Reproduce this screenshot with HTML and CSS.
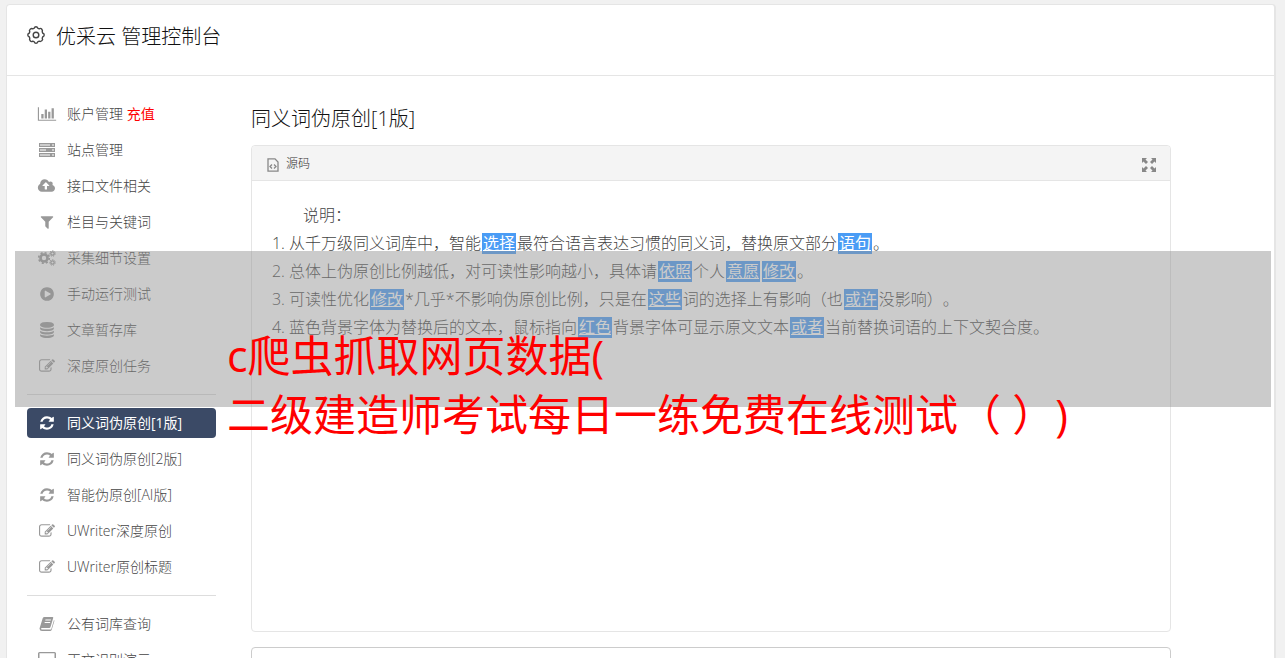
FILE: index.html
```html
<!DOCTYPE html>
<html lang="zh-CN">
<head>
    <meta charset="UTF-8">
    <meta name="viewport" content="width=device-width, initial-scale=1.0">
    <title>优采云 管理控制台</title>
    <link rel="stylesheet" href="styles.css">
</head>
<body>

    <svg class="sprite" aria-hidden="true">
        <symbol id="i-chart" viewBox="0 0 2048 1792"><path d="M640 896v512h-256v-512h256zm384-512v1024h-256v-1024h256zm1024 1152v128h-2048v-1536h128v1408h1920zm-640-896v768h-256v-768h256zm384-384v1152h-256v-1152h256z"/></symbol>
        <symbol id="i-server" viewBox="0 0 16 16"><path fill-rule="evenodd" d="M0 1h16v4H0zM1 2.500v1h10v-1zM13 2.500v1h2v-1zM0 6h16v4H0zM1 7.500v1h6v-1zM13 7.500v1h2v-1zM0 11h16v4H0zM1 12.500v1h10v-1zM13 12.500v1h2v-1z"/></symbol>
        <symbol id="i-cloud" viewBox="0 0 1920 1792"><path d="M1216 864q0-14-9-23l-352-352q-9-9-23-9t-23 9l-351 351q-10 12-10 24 0 14 9 23t23 9h224v352q0 13 9.500 22.500t22.500 9.500h192q13 0 22.500-9.500t9.500-22.500v-352h224q13 0 22.500-9.500t9.500-22.500zm640 288q0 159-112.500 271.500t-271.500 112.500h-1088q-185 0-316.500-131.500t-131.500-316.500q0-130 70-240t188-165q-2-30-2-43 0-212 150-362t362-150q156 0 285.500 87t188.500 231q71-62 166-62 106 0 181 75t75 181q0 76-41 138 130 31 213.500 135.500t83.500 238.500z"/></symbol>
        <symbol id="i-filter" viewBox="0 0 1792 1792"><path d="M1595 295q17 41-14 70l-493 493v742q0 42-39 59-13 5-25 5-27 0-45-19l-256-256q-19-19-19-45v-486l-493-493q-31-29-14-70 17-39 59-39h1280q42 0 59 39z"/></symbol>
        <symbol id="i-cogs" viewBox="0 0 18 16">
            <g fill="none" stroke="currentColor">
                <circle cx="6" cy="8" r="3.500" stroke-width="2.600"/>
                <circle cx="6" cy="8" r="5.300" stroke-width="1.600" stroke-dasharray="2.080 2.080"/>
                <circle cx="14.500" cy="3.500" r="1.700" stroke-width="1.300"/>
                <circle cx="14.500" cy="3.500" r="2.800" stroke-width="1" stroke-dasharray="1.250 1.260"/>
                <circle cx="14.500" cy="12.500" r="1.700" stroke-width="1.300"/>
                <circle cx="14.500" cy="12.500" r="2.800" stroke-width="1" stroke-dasharray="1.250 1.260"/>
            </g>
        </symbol>
        <symbol id="i-play" viewBox="0 0 1792 1792"><path d="M896 128q209 0 385.500 103t279.500 279.500 103 385.500-103 385.500-279.500 279.500-385.500 103-385.500-103-279.500-279.500-103-385.500 103-385.500 279.500-279.500 385.500-103zm384 823q32-18 32-55t-32-55l-544-320q-31-19-64-1-32 19-32 56v640q0 37 32 56 16 8 32 8 17 0 32-9z"/></symbol>
        <symbol id="i-database" viewBox="0 0 1792 1792"><path d="M896 768q237 0 443-43t325-127v170q0 69-103 128t-280 93.500-385 34.500-385-34.500-280-93.500-103-128v-170q119 84 325 127t443 43zm0 768q237 0 443-43t325-127v170q0 69-103 128t-280 93.500-385 34.500-385-34.500-280-93.500-103-128v-170q119 84 325 127t443 43zm0-384q237 0 443-43t325-127v170q0 69-103 128t-280 93.500-385 34.500-385-34.500-280-93.500-103-128v-170q119 84 325 127t443 43zm0-1152q208 0 385 34.500t280 93.500 103 128v128q0 69-103 128t-280 93.500-385 34.500-385-34.500-280-93.500-103-128v-128q0-69 103-128t280-93.500 385-34.500z"/></symbol>
        <symbol id="i-edit" viewBox="0 0 1792 1792"><path d="M888 1184l116-116-152-152-116 116v56h96v96h56zm440-720q-16-16-33 1l-350 350q-17 17-1 33t33-1l350-350q17-17 1-33zm80 594v190q0 119-84.500 203.500t-203.500 84.500h-832q-119 0-203.500-84.500t-84.500-203.500v-832q0-119 84.500-203.500t203.500-84.500h832q63 0 117 25 15 7 18 23 3 17-9 29l-49 49q-14 14-32 8-23-6-45-6h-832q-66 0-113 47t-47 113v832q0 66 47 113t113 47h832q66 0 113-47t47-113v-126q0-13 9-22l64-64q15-15 35-7t20 29zm-96-738l288 288-672 672h-288v-288zm444 132l-92 92-288-288 92-92q28-28 68-28t68 28l152 152q28 28 28 68t-28 68z"/></symbol>
        <symbol id="i-refresh" viewBox="0 0 1792 1792"><path d="M1639 1056q0 5-1 7-64 268-268 434.500t-478 166.500q-146 0-282.500-55t-243.500-157l-129 129q-19 19-45 19t-45-19-19-45v-448q0-26 19-45t45-19h448q26 0 45 19t19 45-19 45l-137 137q71 66 161 102t187 36q134 0 250-65t186-179q11-17 53-117 8-23 30-23h192q13 0 22.500 9.500t9.500 22.500zm25-800v448q0 26-19 45t-45 19h-448q-26 0-45-19t-19-45 19-45l138-138q-148-137-349-137-134 0-250 65t-186 179q-11 17-53 117-8 23-30 23h-199q-13 0-22.500-9.500t-9.500-22.500v-7q65-268 270-434.500t480-166.500q146 0 284 55.500t245 156.500l130-129q19-19 45-19t45 19 19 45z"/></symbol>
        <symbol id="i-book" viewBox="0 0 16 16"><path fill-rule="evenodd" d="M5.500 1h8q1 0 .7 1L11.500 11q-.3 1-1.300 1H3q-1 0-1 .7t1 .8h8.500q.6 0 .8-.6L15 4q.6.500.3 1.300L12.700 13.700Q12.300 15 11 15H3Q.6 15 .5 12.500L3.700 2.300Q4.200 1 5.500 1zM6.500 3.500l-.3 1h5.500l.3-1zM5.800 6l-.3 1H11l.3-1z"/></symbol>
        <symbol id="i-desktop" viewBox="0 0 18 16"><path fill-rule="evenodd" d="M1.500 0h15Q18 0 18 1.500v10q0 1.500-1.500 1.500H11v1.500h2V16H5v-1.500h2V13H1.500Q0 13 0 11.500v-10Q0 0 1.500 0zm0 1.300v8.700h15V1.300z"/></symbol>
    </svg>

    <div class="page">
        <header class="page-header">
            <svg class="logo" viewBox="0 0 18 18" fill="none" stroke="currentColor" stroke-width="1.400">
                <path stroke-linejoin="round" d="M7.300 2.200Q7.600.8 9 .8T10.700 2.200L12.200 2.800Q13.700 1.800 14.800 3.200T15.200 5.800L15.800 7.300Q17.200 7.600 17.200 9T15.800 10.700L15.200 12.200Q16.200 13.700 14.800 14.800T12.200 15.200L10.700 15.800Q10.400 17.200 9 17.200T7.300 15.800L5.800 15.200Q4.300 16.200 3.200 14.800T2.800 12.200L2.200 10.700Q.8 10.400.8 9T2.200 7.300L2.800 5.800Q1.800 4.300 3.200 3.200T5.800 2.800z"/>
                <circle cx="9" cy="9" r="2.800"/>
            </svg>
            <h1>优采云 管理控制台</h1>
        </header>

        <div class="layout">
            <nav class="sidebar">
                <a class="item" href="#"><svg><use href="#i-chart"/></svg><span>账户管理 <span class="recharge">充值</span></span></a>
                <a class="item" href="#"><svg><use href="#i-server"/></svg>站点管理</a>
                <a class="item" href="#"><svg><use href="#i-cloud"/></svg>接口文件相关</a>
                <a class="item" href="#"><svg><use href="#i-filter"/></svg>栏目与关键词</a>
                <a class="item" href="#"><svg><use href="#i-cogs"/></svg>采集细节设置</a>
                <a class="item" href="#"><svg><use href="#i-play"/></svg>手动运行测试</a>
                <a class="item" href="#"><svg><use href="#i-database"/></svg>文章暂存库</a>
                <a class="item" href="#"><svg><use href="#i-edit"/></svg>深度原创任务</a>
                <hr>
                <a class="item active" href="#"><svg><use href="#i-refresh"/></svg>同义词伪原创[1版]</a>
                <a class="item" href="#"><svg><use href="#i-refresh"/></svg>同义词伪原创[2版]</a>
                <a class="item" href="#"><svg><use href="#i-refresh"/></svg>智能伪原创[AI版]</a>
                <a class="item" href="#"><svg><use href="#i-edit"/></svg>UWriter深度原创</a>
                <a class="item" href="#"><svg><use href="#i-edit"/></svg>UWriter原创标题</a>
                <hr>
                <a class="item" href="#"><svg><use href="#i-book"/></svg>公有词库查询</a>
                <a class="item" href="#"><svg><use href="#i-desktop"/></svg>正文识别演示</a>
            </nav>

            <main class="content">
                <h2>同义词伪原创[1版]</h2>
                <section class="editor">
                    <div class="toolbar">
                        <button class="tool" type="button">
                            <svg class="source-icon" viewBox="0 0 12 14" fill="none" stroke="currentColor">
                                <path d="M1 .8h7L11 4v9.200H1z" stroke-width="1.300"/>
                                <path d="M5 6.500L3 8.500l2 2M7 6.500l2 2-2 2" stroke-width="1.300"/>
                            </svg>
                            源码
                        </button>
                        <button class="tool" type="button" aria-label="全屏">
                            <svg class="full-icon" viewBox="0 0 14 14">
                                <path d="M0 0h5L3.500 1.500 6 4 4 6 1.500 3.500 0 5zM14 0v5l-1.500-1.500L10 6 8 4l2.500-2.500L9 0zM0 14V9l1.500 1.500L4 8l2 2-2.500 2.500L5 14zM14 14H9l1.500-1.500L8 10l2-2 2.500 2.500L14 9z"/>
                            </svg>
                        </button>
                    </div>
                    <div class="text">
                        <p>说明：</p>
                        <ol>
                            <li>从千万级同义词库中，智能<a href="#">选择</a>最符合语言表达习惯的同义词，替换原文部分<a href="#">语句</a>。</li>
                            <li>总体上伪原创比例越低，对可读性影响越小，具体请<a href="#">依照</a>个人<a href="#">意愿</a><a href="#">修改</a>。</li>
                            <li>可读性优化<a href="#">修改</a>*几乎*不影响伪原创比例，只是在<a href="#">这些</a>词的选择上有影响（也<a href="#">或许</a>没影响）。</li>
                            <li>蓝色背景字体为替换后的文本，鼠标指向<a href="#">红色</a>背景字体可显示原文文本<a href="#">或者</a>当前替换词语的上下文契合度。</li>
                        </ol>
                    </div>
                </section>
                <textarea class="result" aria-label="结果"></textarea>
            </main>
        </div>
    </div>

    <div class="banner">
        <p>c爬虫抓取网页数据(<br>二级建造师考试每日一练免费在线测试（ ）)</p>
    </div>

</body>
</html>
```
FILE: styles.css
```css
* {
    box-sizing: border-box;
}
body {
    position: relative;
    height: 100vh;
    margin: 0;
    padding: 4px 9px 0 6px;
    overflow: hidden;
    background: #f1f1f1;
    color: #555;
    font-family: "Open Sans", "Noto Sans CJK SC", sans-serif;
    font-size: 14px;
    text-spacing-trim: space-all;
}
h1, h2, p, ol {
    margin: 0;
    padding: 0;
}
h1, h2 {
    color: #111;
    font-size: 20px;
    font-weight: 300;
    line-height: 30px;
}
.sprite {
    display: none;
}
.page {
    background: #fff;
    border: 1px solid #e5e5e5;
    border-right-width: 2px;
    border-radius: 4px;
}
.page-header {
    display: flex;
    align-items: flex-start;
    gap: 11px;
    height: 71px;
    padding: 17px 20px 16px;
    border-bottom: 1px solid #e5e5e5;
}
.logo {
    width: 18px;
    height: 18px;
    margin-top: 4px;
    color: #444;
}
.layout {
    display: flex;
    gap: 35px;
    padding: 23px 20px;
}
.sidebar {
    display: flex;
    flex: 0 0 189px;
    flex-direction: column;
    gap: 6px;
}
.item {
    display: flex;
    align-items: center;
    gap: 10px;
    height: 30px;
    padding: 0 0 2px 10px;
    border-radius: 4px;
    color: #444;
    font-weight: 300;
    text-decoration: none;
    white-space: nowrap;
}
.item svg {
    width: 20px;
    height: 16px;
    margin-top: 2px;
    fill: #999;
    color: #999;
}
.item.active {
    background: #3b4a66;
    color: #fff;
    font-weight: 400;
}
.item.active svg {
    fill: #fff;
}
.recharge {
    color: #f00;
    font-weight: 400;
}
.sidebar hr {
    width: 100%;
    margin: 7px 0;
    border: 0;
    border-top: 1px solid #ddd;
}
.content {
    flex: 1;
    max-width: 920px;
    padding-top: 5px;
}
.editor {
    margin: 11px 0 15px;
    border: 1px solid #e5e5e5;
    border-radius: 4px;
}
.toolbar {
    display: flex;
    align-items: center;
    justify-content: space-between;
    height: 35px;
    padding: 0 14px 0 15px;
    background: #f4f4f4;
    border-bottom: 1px solid #e5e5e5;
    border-radius: 4px 4px 0 0;
}
.tool {
    display: flex;
    align-items: center;
    gap: 7px;
    padding: 0;
    background: none;
    border: 0;
    color: #333;
    font-family: inherit;
    font-size: 12px;
    font-weight: 300;
    cursor: pointer;
}
.source-icon {
    width: 12px;
    height: 14px;
    margin-top: 3px;
    color: #888;
}
.full-icon {
    width: 14px;
    height: 14px;
    margin-top: 3px;
    fill: #888;
}
.text {
    min-height: 450px;
    padding: 20px 20px 20px 37px;
    color: #444;
    font-size: 16px;
    font-weight: 300;
    line-height: 28px;
}
.text p {
    padding-left: 14px;
}
.text a {
    display: inline-block;
    margin: 0 1px;
    padding: 0 1px;
    background: #4a9cf5;
    color: #fff;
    font-weight: 400;
    line-height: 21px;
}
.result {
    display: block;
    width: 100%;
    height: 120px;
    border: 1px solid #ccc;
    border-radius: 4px;
    resize: none;
}
/* title strip laid over the page */
.banner {
    position: absolute;
    top: 251px;
    left: 15px;
    right: 14px;
    height: 156px;
    padding: 75px 0 0 212px;
    background: rgba(147, 147, 147, 0.48);
    color: #f00;
    font-size: 43px;
    line-height: 59px;
    white-space: nowrap;
}
```
